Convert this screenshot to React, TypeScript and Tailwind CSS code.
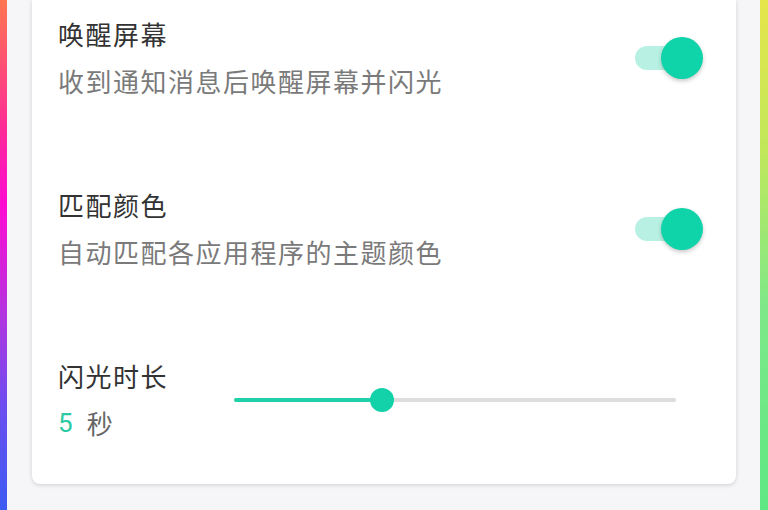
import React from "react";

const font = { fontFamily: '"Noto Sans CJK SC", "Noto Sans", sans-serif' };

function Toggle() {
  return (
    <div className="relative mr-[33px] h-[42px] w-[68px] shrink-0">
      <div className="absolute left-0 top-[9px] h-[24px] w-[56px] rounded-full bg-[#b8f1e3]" />
      <div className="absolute right-0 top-0 h-[42px] w-[42px] rounded-full bg-[#0fd3a9] shadow-[0_2px_4px_rgba(0,0,0,0.22)]" />
    </div>
  );
}

function SettingRow({ title, desc }: { title: string; desc: string }) {
  return (
    <div className="flex items-center justify-between">
      <div className="flex flex-col gap-[13px]">
        <div className="text-[26px] leading-[34px] tracking-[1.5px] text-[#333333]">{title}</div>
        <div className="text-[26px] leading-[34px] tracking-[1.5px] text-[#7a7a7a]">{desc}</div>
      </div>
      <Toggle />
    </div>
  );
}

function Slider({ value }: { value: number }) {
  return (
    <div className="relative mr-[60px] h-[24px] flex-1">
      <div className="absolute left-0 right-0 top-[10px] h-[4px] rounded-full bg-[#dddde0]" />
      <div className="absolute left-0 top-[10px] h-[4px] rounded-full bg-[#1fd0aa]" style={{ width: `${value}%` }} />
      <div
        className="absolute top-0 h-[24px] w-[24px] -translate-x-1/2 rounded-full bg-[#13d1a9]"
        style={{ left: `${value}%` }}
      />
    </div>
  );
}

export default function App() {
  return (
    <div className="flex h-[510px] w-[768px] overflow-hidden bg-[#f6f6f8]" style={font}>
      <div className="h-full w-[7px] shrink-0 bg-[linear-gradient(to_bottom,#ff7650_0%,#ff2c96_25%,#ff0ad2_40%,#b236e0_62%,#6a4ef0_80%,#3c5cf2_100%)]" />
      <div className="ml-[25px] h-[484px] w-[704px] shrink-0 rounded-b-lg bg-white pl-[26px] pt-[17px] shadow-[0_1px_4px_rgba(0,0,0,0.16)]">
        <SettingRow title="唤醒屏幕" desc="收到通知消息后唤醒屏幕并闪光" />
        <div className="h-[90px]" />
        <SettingRow title="匹配颜色" desc="自动匹配各应用程序的主题颜色" />
        <div className="h-[90px]" />
        <div className="flex items-center">
          <div className="flex w-[176px] shrink-0 flex-col gap-[13px]">
            <div className="text-[26px] leading-[34px] tracking-[1.5px] text-[#333333]">闪光时长</div>
            <div className="flex items-center text-[26px] leading-[34px]">
              <span className="text-[#2cc9a3]" style={{ fontFamily: '"Roboto", sans-serif' }}>5</span>
              <span className="ml-[14px] text-[#666666]">秒</span>
            </div>
          </div>
          <Slider value={33.5} />
        </div>
      </div>
      <div className="flex-1" />
      <div className="h-full w-[8px] shrink-0 bg-[linear-gradient(to_bottom,#e6e64a_0%,#bfe85a_30%,#7ee888_60%,#5ee884_100%)]" />
    </div>
  );
}
